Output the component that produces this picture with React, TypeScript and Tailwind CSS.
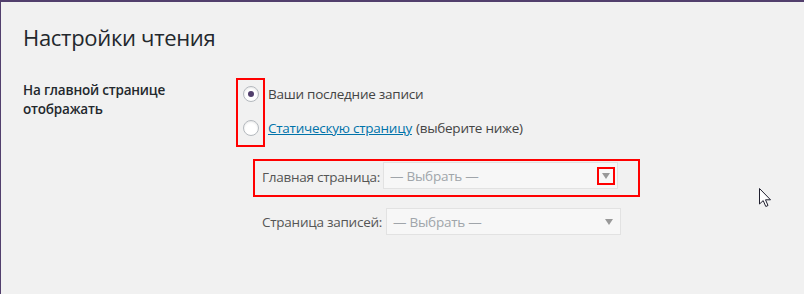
import React from "react";

const font = { fontFamily: '"Open Sans", "Noto Sans", sans-serif' };

const Radio = ({ checked }: { checked?: boolean }) => (
    <span className="flex h-[16px] w-[16px] items-center justify-center rounded-full border border-[#b4b9be] bg-white shadow-[inset_0_1px_2px_rgba(0,0,0,0.1)]">
        {checked && <span className="h-[6px] w-[6px] rounded-full bg-[#523f6d]" />}
    </span>
);

const SelectBox = ({ marked }: { marked?: boolean }) => (
    <div className="flex h-[27px] w-[235px] items-center justify-between border border-[#e2e2e2] bg-[#f7f7f7] pl-[6px] pr-[2px]">
        <span className="mt-[1px] text-[13.5px] tracking-[-0.25px] text-[#a0a5aa]">— Выбрать —</span>
        <span
            className={`flex h-[18px] w-[18px] items-center justify-center ${marked ? "border-2 border-[#ff0000]" : ""}`}
        >
            <svg width="8" height="6" viewBox="0 0 8 6">
                <path d="M0 0H8L4 6Z" fill="#999" />
            </svg>
        </span>
    </div>
);

export default function App() {
    return (
        <div
            style={font}
            className="relative h-[294px] w-[804px] overflow-hidden border-l border-t-2 border-[#523f6d] bg-[#f1f1f1] pl-[22px] text-[#23282d]"
        >
            <h1 className="mt-[21px] text-[22px] font-normal leading-[29px] tracking-[-0.3px]">Настройки чтения</h1>

            <div className="mt-[26px] flex">
                <div className="w-[213px] pt-[3px] text-[13.5px] font-semibold leading-[19px] tracking-[-0.2px]">
                    На главной странице
                    <br />
                    отображать
                </div>

                <div className="flex flex-col text-[13.5px] tracking-[-0.25px]">
                    <div className="flex">
                        <div className="flex w-[29px] flex-col items-center gap-[18px] border-2 border-[#ff0000] pb-[9px] pt-[6px]">
                            <Radio checked />
                            <Radio />
                        </div>
                        <div className="flex flex-col pl-[3px] pt-[8px] text-[#444]">
                            <div className="flex h-[16px] items-center">Ваши последние записи</div>
                            <div className="mt-[18px] flex h-[16px] items-center">
                                <span className="text-[#0073aa] underline">Статическую страницу</span>
                                <span className="ml-[4px]">(выберите ниже)</span>
                            </div>
                        </div>
                    </div>

                    <div className="ml-[17px] mt-[12px] flex w-[387px] items-start border-2 border-[#ff0000] pb-[6px] pl-[7px] pt-[1px]">
                        <span className="mt-[5px] w-[121px] text-[#555]">Главная страница:</span>
                        <SelectBox marked />
                    </div>

                    <div className="ml-[26px] mt-[11px] flex items-center">
                        <span className="mt-[1px] w-[124px] text-[#555]">Страница записей:</span>
                        <SelectBox />
                    </div>
                </div>
            </div>

            <svg className="absolute left-[758px] top-[186px]" width="13" height="20" viewBox="0 0 13 20">
                <path d="M0.5 0.5V16L4.2 12.6L6.8 18.5L9 17.5L6.5 11.8H11.5Z" fill="#fff" stroke="#1f1f2e" strokeWidth="1" strokeLinejoin="miter" />
            </svg>
        </div>
    );
}
